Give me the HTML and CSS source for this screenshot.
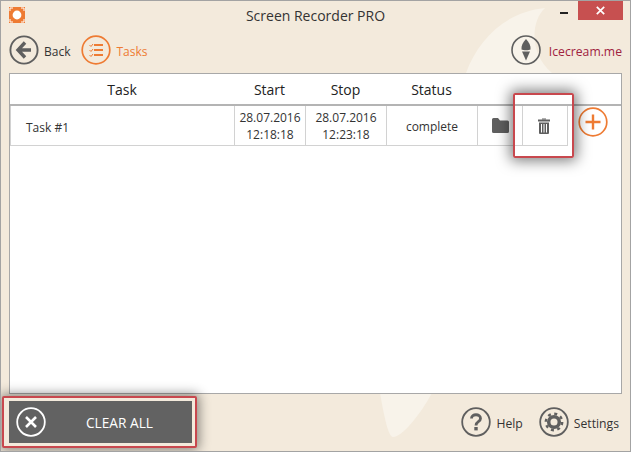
FILE: index.html
```html
<!DOCTYPE html>
<html lang="en">
<head>
<meta charset="utf-8">
<title>Screen Recorder PRO</title>
<link rel="stylesheet" href="styles.css">
</head>
<body>
<div class="window">
  <svg class="swirl" width="631" height="452" viewBox="0 0 631 452" aria-hidden="true">
    <path class="swirl-a" d="M466 73C478 40 505 12 545 8C530 22 530 55 552 73Z"/>
    <path class="swirl-a" d="M380 393C384 415 388 437 393 437C402 437 420 415 432 393Z"/>
  </svg>
  <header class="titlebar">
    <svg class="app-icon" width="16" height="16" viewBox="0 0 16 16">
      <rect width="16" height="16" fill="#ee7b33"/>
      <circle cx="8" cy="8" r="4.4" fill="#fff"/>
      <path d="M1 4V1H4M12 1H15V4M15 12V15H12M4 15H1V12" fill="none" stroke="#fff"/>
    </svg>
    <div class="title">Screen Recorder PRO</div>
    <div class="controls">
      <span class="min"></span>
      <span class="close">
        <svg width="9" height="9" viewBox="0 0 9 9"><path d="M.8.8L8.2 8.2M8.2.8L.8 8.2" stroke="#fff" stroke-width="1.7"/></svg>
      </span>
    </div>
  </header>
  <nav class="nav">
    <a class="nav-item">
      <svg class="circle-icon" width="30" height="30" viewBox="0 0 30 30">
        <circle cx="15" cy="15" r="13.6" fill="none" stroke="#5f5f5f" stroke-width="1.9"/>
        <path d="M16 7.5L9 15L16 22.5M9.500 15H22" fill="none" stroke="#5f5f5f" stroke-width="3.400"/>
      </svg>
      <span>Back</span>
    </a>
    <a class="nav-item tasks">
      <svg class="circle-icon" width="30" height="30" viewBox="0 0 30 30">
        <circle cx="15" cy="15" r="13.800" fill="none" stroke="#ee7b33" stroke-width="1.700"/>
        <path d="M13 10H22M13 15H22M13 20H22" stroke="#ee7b33" stroke-width="2.200"/>
        <path d="M8.500 10L10 11.500L12 9M8.500 15L10 16.500L12 14M8.500 20L10 21.500L12 19" fill="none" stroke="#ee7b33" stroke-width="1"/>
      </svg>
      <span>Tasks</span>
    </a>
    <a class="nav-item brand">
      <svg class="circle-icon" width="30" height="30" viewBox="0 0 30 30">
        <circle cx="15" cy="15" r="14" fill="none" stroke="#5f5f5f" stroke-width="1.600"/>
        <path d="M15 4C12 7 10 11 10.500 14.500C12 15.500 18 15.500 19.500 14.500C20 11 18 7 15 4Z" fill="#5f5f5f"/>
        <path d="M11 16.500L19 16.500L15 25.500Z" fill="#5f5f5f"/>
      </svg>
      <span>Icecream.me</span>
    </a>
  </nav>
  <main class="panel">
    <div class="row head">
      <div class="c-task">Task</div>
      <div class="c-start">Start</div>
      <div class="c-stop">Stop</div>
      <div class="c-status">Status</div>
    </div>
    <div class="task-line">
      <div class="row item">
        <div class="c-task name">Task #1</div>
        <div class="c-start">28.07.2016<br>12:18:18</div>
        <div class="c-stop">28.07.2016<br>12:23:18</div>
        <div class="c-status">complete</div>
        <div class="c-btn">
          <svg width="17" height="15" viewBox="0 0 17 15"><path d="M0 1.500Q0 0 1.500 0H6L8 2.500H15.500Q17 2.500 17 4V13.500Q17 15 15.500 15H1.500Q0 15 0 13.500Z" fill="#5f5f5f"/></svg>
        </div>
        <div class="c-btn trash">
          <svg width="14" height="16" viewBox="0 0 14 16">
            <path d="M5 .5H9V1.500H5Z" fill="#5f5f5f"/>
            <path d="M1 1.500H13V3.500H1Z" fill="#5f5f5f"/>
            <path fill-rule="evenodd" d="M2 4.500H12V15Q12 16 11 16H3Q2 16 2 15ZM4 6V14.500H5V6ZM6.500 6V14.500H7.500V6ZM9 6V14.500H10V6Z" fill="#5f5f5f"/>
          </svg>
        </div>
      </div>
      <svg class="add" width="30" height="30" viewBox="0 0 30 30">
        <circle cx="15" cy="15" r="13.800" fill="none" stroke="#ee7b33" stroke-width="1.700"/>
        <path d="M15 7.500V22.500M7.500 15H22.500" stroke="#ee7b33" stroke-width="2.400"/>
      </svg>
    </div>
    <div class="highlight"></div>
  </main>
  <footer class="footer">
    <div class="clear-frame">
      <button class="clear" type="button">
        <svg width="30" height="30" viewBox="0 0 30 30">
          <circle cx="15" cy="15" r="13.800" fill="none" stroke="#fff" stroke-width="1.800"/>
          <path d="M10 10L20 20M20 10L10 20" stroke="#fff" stroke-width="2.600"/>
        </svg>
        <span>CLEAR ALL</span>
      </button>
    </div>
    <div class="foot-links">
      <a class="nav-item">
        <svg class="circle-icon" width="30" height="30" viewBox="0 0 30 30">
          <circle cx="15" cy="15" r="13.800" fill="none" stroke="#5f5f5f" stroke-width="1.800"/>
          <path d="M10.500 11.500C10.500 6.500 19.500 6.500 19.500 11.500C19.500 15 15 14.500 15 18.500" fill="none" stroke="#5f5f5f" stroke-width="2.800"/>
          <rect x="13.300" y="20" width="3.400" height="3.400" fill="#5f5f5f"/>
        </svg>
        <span>Help</span>
      </a>
      <a class="nav-item">
        <svg class="circle-icon" width="30" height="30" viewBox="0 0 30 30">
          <circle cx="15" cy="15" r="13.800" fill="none" stroke="#5f5f5f" stroke-width="1.800"/>
          <circle cx="15" cy="15" r="5.300" fill="none" stroke="#5f5f5f" stroke-width="3.500"/>
          <circle cx="15" cy="15" r="8.200" fill="none" stroke="#5f5f5f" stroke-width="2.400" stroke-dasharray="3 3.440"/>
        </svg>
        <span>Settings</span>
      </a>
    </div>
  </footer>
</div>
</body>
</html>
```

FILE: styles.css
```css
* { box-sizing: border-box; }
html, body { margin: 0; height: 100%; overflow: hidden; }
body { font-family: "Open Sans", "Noto Sans", sans-serif; color: #222; }
.window {
  position: relative;
  width: 631px;
  height: 452px;
  background: #f3eadc;
  border: 1px solid #a3a3a3;
  display: flex;
  flex-direction: column;
  overflow: hidden;
}
.swirl { position: absolute; left: -1px; top: -1px; z-index: 0; }
.swirl-a { fill: #f8f3ea; }
.titlebar {
  position: relative;
  z-index: 1;
  height: 31px;
  flex: none;
  display: flex;
  align-items: center;
  justify-content: center;
}
.app-icon { position: absolute; left: 8px; top: 6px; }
.title { font-size: 14px; color: #333; padding-bottom: 3px; }
.controls {
  position: absolute;
  right: 7px;
  top: 0;
  display: flex;
  align-items: flex-start;
}
.min { width: 8px; height: 2px; background: #222; margin: 11px 10px 0 0; }
.close {
  width: 45px;
  height: 19px;
  background: #c75050;
  display: flex;
  align-items: center;
  justify-content: center;
}
.nav {
  position: relative;
  z-index: 1;
  height: 41px;
  flex: none;
  display: flex;
  align-items: flex-start;
  padding: 3px 8px 0 8px;
  gap: 11px;
}
.nav-item { display: flex; align-items: center; gap: 5px; font-size: 12px; color: #333; }
.nav-item span { position: relative; top: 1px; }
.circle-icon { flex: none; }
.tasks { color: #ee7b33; gap: 5px; }
.brand { margin-left: auto; color: #a0233f; gap: 8px; font-size: 12.200px; }
.panel {
  position: relative;
  z-index: 1;
  flex: none;
  height: 321px;
  margin: 0 8px;
  background: #fff;
  border: 1px solid #a8a8a8;
}
.row { display: flex; }
.head {
  height: 32px;
  border-bottom: 2px solid #b4b4b4;
  font-size: 14px;
  color: #222;
  text-align: center;
  align-items: center;
}
.c-task { width: 224px; flex: none; }
.c-start { width: 71px; flex: none; }
.c-stop { width: 81px; flex: none; }
.c-status { width: 91px; flex: none; }
.task-line { display: flex; align-items: flex-start; }
.item {
  position: relative;
  width: 558px;
  height: 40px;
  border-left: 1px solid #d2d2d2;
  border-bottom: 1px solid #d2d2d2;
  border-right: 1px solid #d2d2d2;
  font-size: 12px;
  line-height: 17px;
  text-align: center;
  color: #333;
}
.item > div {
  display: flex;
  align-items: center;
  justify-content: center;
  height: 100%;
  border-left: 1px solid #d2d2d2;
}
.item .name {
  width: 223px;
  border-left: 0;
  justify-content: flex-start;
  padding: 3px 0 0 15px;
}
.item .c-start, .item .c-stop { display: block; padding-top: 3px; }
.item .c-status { padding-top: 1px; }
.c-btn { width: 45px; flex: none; }
.c-btn.trash { padding-right: 2px; }
.add { margin: 1px 0 0 10px; flex: none; }
.highlight {
  position: absolute;
  left: 503px;
  top: 19px;
  width: 61px;
  height: 65px;
  border: 2px solid #c8484e;
  border-radius: 2px;
  box-shadow: 0 0 14px 3px rgba(0, 0, 0, .5);
  clip-path: inset(-24px);
}
.footer {
  position: relative;
  z-index: 2;
  flex: 1;
  display: flex;
  align-items: flex-start;
  justify-content: space-between;
  padding: 2px 11px 0 1px;
}
.clear-frame {
  width: 195px;
  height: 52px;
  padding: 3px 3px 3px 5px;
  background: #f3eadc;
  border: 2px solid #c8484e;
  border-radius: 2px;
  box-shadow: 0 0 12px 2px rgba(0, 0, 0, .45);
}
.clear {
  width: 100%;
  height: 100%;
  border: 0;
  margin: 0;
  background: #626262;
  color: #fff;
  display: flex;
  align-items: center;
  padding: 0 0 0 7px;
  font: inherit;
  font-size: 13.700px;
}
.clear span { margin-left: 40px; }
.foot-links { display: flex; gap: 16px; padding-top: 11px; }
.foot-links .nav-item { font-size: 12.200px; }
```
